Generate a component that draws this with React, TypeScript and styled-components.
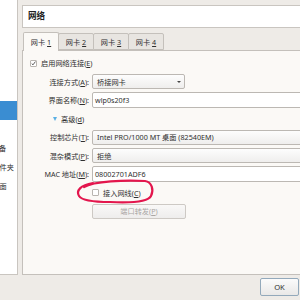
import styled, { createGlobalStyle } from 'styled-components';

const GlobalStyle = createGlobalStyle`
  html, body {
    margin: 0;
    padding: 0;
  }
  body {
    width: 300px;
    height: 300px;
    overflow: hidden;
    background: #eeebe7;
    font-family: "Noto Sans", "Noto Sans CJK SC", sans-serif;
    font-size: 7.2px;
    color: #2f2f2f;
  }
`;

const Window = styled.div`
  position: relative;
  display: flex;
  flex-direction: column;
  width: 300px;
  height: 300px;
  overflow: hidden;
`;

const Main = styled.div`
  display: flex;
  gap: 4px;
  height: 275px;
`;

const Sidebar = styled.div`
  flex: none;
  width: 18px;
  box-sizing: border-box;
  padding-top: 6px;
  background: #fff;
  border-right: 1px solid #c9c5c0;
  border-bottom: 1px solid #c9c5c0;
  overflow: hidden;
`;

const SideList = styled.ul`
  list-style: none;
  margin: 0 0 0 -22px;
  padding: 0;
`;

const SideItem = styled.li<{ $selected?: boolean }>`
  height: 19px;
  line-height: 19px;
  white-space: nowrap;
  background: ${p => (p.$selected ? '#3a8dd2' : 'transparent')};
  color: ${p => (p.$selected ? '#fff' : '#2f2f2f')};
`;

const Content = styled.div`
  flex: 1;
  display: flex;
  flex-direction: column;
  min-width: 0;
  margin-right: -20px;
  padding-top: 5px;
`;

const Header = styled.div`
  height: 23px;
  box-sizing: border-box;
  padding-left: 5px;
  background: #fff;
  border: 1px solid #c9c5c0;
  font-size: 8.6px;
  font-weight: bold;
  line-height: 21px;
  color: #222;
`;

const TabBar = styled.div`
  display: flex;
  margin-top: 4px;
  padding-left: 1px;
  height: 18px;
`;

const Tab = styled.div<{ $active?: boolean }>`
  position: relative;
  z-index: ${p => (p.$active ? 1 : 0)};
  width: 36px;
  box-sizing: border-box;
  margin-top: ${p => (p.$active ? '0' : '1px')};
  margin-bottom: ${p => (p.$active ? '-1px' : '0')};
  margin-right: -1px;
  display: flex;
  align-items: center;
  justify-content: center;
  background: ${p => (p.$active ? '#fbf9f6' : '#e8e5e1')};
  border: 1px solid #c4c0bb;
  border-bottom: ${p => (p.$active ? 'none' : '1px solid #c4c0bb')};
  border-radius: 2px 2px 0 0;
  white-space: pre;
`;

const Panel = styled.div`
  flex: 1;
  box-sizing: border-box;
  padding: 7px 0 0 7px;
  background: #fbf9f6;
  border: 1px solid #c4c0bb;
`;

const CheckRow = styled.label`
  display: flex;
  align-items: center;
  gap: 4px;
  height: 10px;
  white-space: nowrap;
`;

const Box = styled.span`
  flex: none;
  display: flex;
  align-items: center;
  justify-content: center;
  width: 7px;
  height: 7px;
  box-sizing: border-box;
  background: #fff;
  border: 1px solid #b9b5b0;
  border-radius: 1px;
`;

const Form = styled.div`
  display: grid;
  grid-template-columns: 59px 1fr;
  grid-auto-rows: 15px;
  column-gap: 3px;
  row-gap: 3.57px;
  margin-top: 6px;
`;

const Label = styled.div`
  grid-column: 1;
  display: flex;
  align-items: center;
  justify-content: flex-end;
  white-space: nowrap;
`;

const Field = styled.div`
  grid-column: 2;
  display: flex;
  align-items: center;
  min-width: 0;
`;

const Combo = styled.div<{ $width?: number }>`
  display: flex;
  align-items: center;
  justify-content: space-between;
  width: ${p => (p.$width ? `${p.$width}px` : '100%')};
  height: 15px;
  box-sizing: border-box;
  padding: 0 3px 0 4px;
  background: linear-gradient(#fdfdfd, #efeeed);
  border: 1px solid #bcb8b3;
  border-radius: 2px;
  white-space: nowrap;
`;

const Arrow = styled.span`
  width: 0;
  height: 0;
  border-left: 2px solid transparent;
  border-right: 2px solid transparent;
  border-top: 2.5px solid #444;
`;

const TextBox = styled.div`
  display: flex;
  align-items: center;
  width: 100%;
  height: 16px;
  box-sizing: border-box;
  padding-left: 2px;
  background: #fff;
  border: 1px solid #bcb8b3;
  border-radius: 2px;
  white-space: nowrap;
`;

const Advanced = styled.div`
  grid-column: 1 / -1;
  display: flex;
  align-items: center;
  gap: 4px;
  padding-left: 23px;
`;

const Triangle = styled.span`
  width: 0;
  height: 0;
  border-left: 2.5px solid transparent;
  border-right: 2.5px solid transparent;
  border-top: 4px solid #5ab0e4;
`;

const PushButton = styled.div<{ $disabled?: boolean }>`
  display: flex;
  align-items: center;
  justify-content: center;
  width: 94px;
  height: 15px;
  box-sizing: border-box;
  background: linear-gradient(#f9f8f7, #eeedec);
  border: 1px solid #cdc9c4;
  border-radius: 2px;
  color: ${p => (p.$disabled ? '#aaa7a4' : '#2f2f2f')};
`;

const Footer = styled.div`
  display: flex;
  justify-content: flex-end;
  padding: 3px 1px 0 0;
`;

const OkButton = styled.div`
  display: flex;
  align-items: center;
  justify-content: center;
  width: 39px;
  height: 18px;
  box-sizing: border-box;
  background: linear-gradient(#fbfbfb, #e9e8e7);
  border: 1px solid #93a9bb;
  border-radius: 2px;
  font-size: 7.6px;
`;

const Scribble = styled.svg`
  position: absolute;
  left: 0;
  top: 0;
  pointer-events: none;
`;

const sideItems = ['常规', '系统', '显示', '存储', '声音', '网络', '串口', 'USB设备', '共享文件夹', '用户界面'];

function Check() {
  return (
    <svg width="7" height="7" viewBox="0 0 7 7">
      <path d="M1 3.6 L2.8 5.4 L6.2 0.8" fill="none" stroke="#333" strokeWidth="1.1" />
    </svg>
  );
}

export default function App() {
  return (
    <Window>
      <GlobalStyle />
      <Main>
        <Sidebar>
          <SideList>
            {sideItems.map(name => (
              <SideItem key={name} $selected={name === '网络'}>{name}</SideItem>
            ))}
          </SideList>
        </Sidebar>

        <Content>
          <Header>网络</Header>
          <TabBar>
            <Tab $active><span>网卡 <u>1</u></span></Tab>
            <Tab><span>网卡 <u>2</u></span></Tab>
            <Tab><span>网卡 <u>3</u></span></Tab>
            <Tab><span>网卡 <u>4</u></span></Tab>
          </TabBar>
          <Panel>
            <CheckRow>
              <Box><Check /></Box>
              <span>启用网络连接(<u>E</u>)</span>
            </CheckRow>

            <Form>
              <Label>连接方式(<u>A</u>):</Label>
              <Field>
                <Combo $width={93}><span>桥接网卡</span><Arrow /></Combo>
              </Field>

              <Label>界面名称(<u>N</u>):</Label>
              <Field>
                <TextBox>wlp0s20f3</TextBox>
              </Field>

              <Advanced><Triangle /><span>高级(<u>d</u>)</span></Advanced>

              <Label>控制芯片(<u>T</u>):</Label>
              <Field>
                <Combo>Intel PRO/1000 MT 桌面 (82540EM)</Combo>
              </Field>

              <Label>混杂模式(<u>P</u>):</Label>
              <Field>
                <Combo>拒绝</Combo>
              </Field>

              <Label>MAC 地址(<u>M</u>):</Label>
              <Field>
                <TextBox>08002701ADF6</TextBox>
              </Field>

              <Field>
                <CheckRow>
                  <Box />
                  <span>接入网线(<u>C</u>)</span>
                </CheckRow>
              </Field>

              <Field>
                <PushButton $disabled><span>端口转发(<u>P</u>)</span></PushButton>
              </Field>
            </Form>
          </Panel>
        </Content>
      </Main>

      <Footer>
        <OkButton>OK</OkButton>
      </Footer>

      <Scribble width="300" height="300" viewBox="0 0 300 300">
        <path
          d="M84 187 C 94 181, 125 180, 145 181 C 152 182, 154 190, 151 196 C 148 202, 130 203, 110 202 C 95 202, 82 201, 79 196 C 76 191, 80 185, 93 183"
          fill="none"
          stroke="#e3164d"
          strokeWidth="2.2"
          strokeLinecap="round"
        />
      </Scribble>
    </Window>
  );
}
